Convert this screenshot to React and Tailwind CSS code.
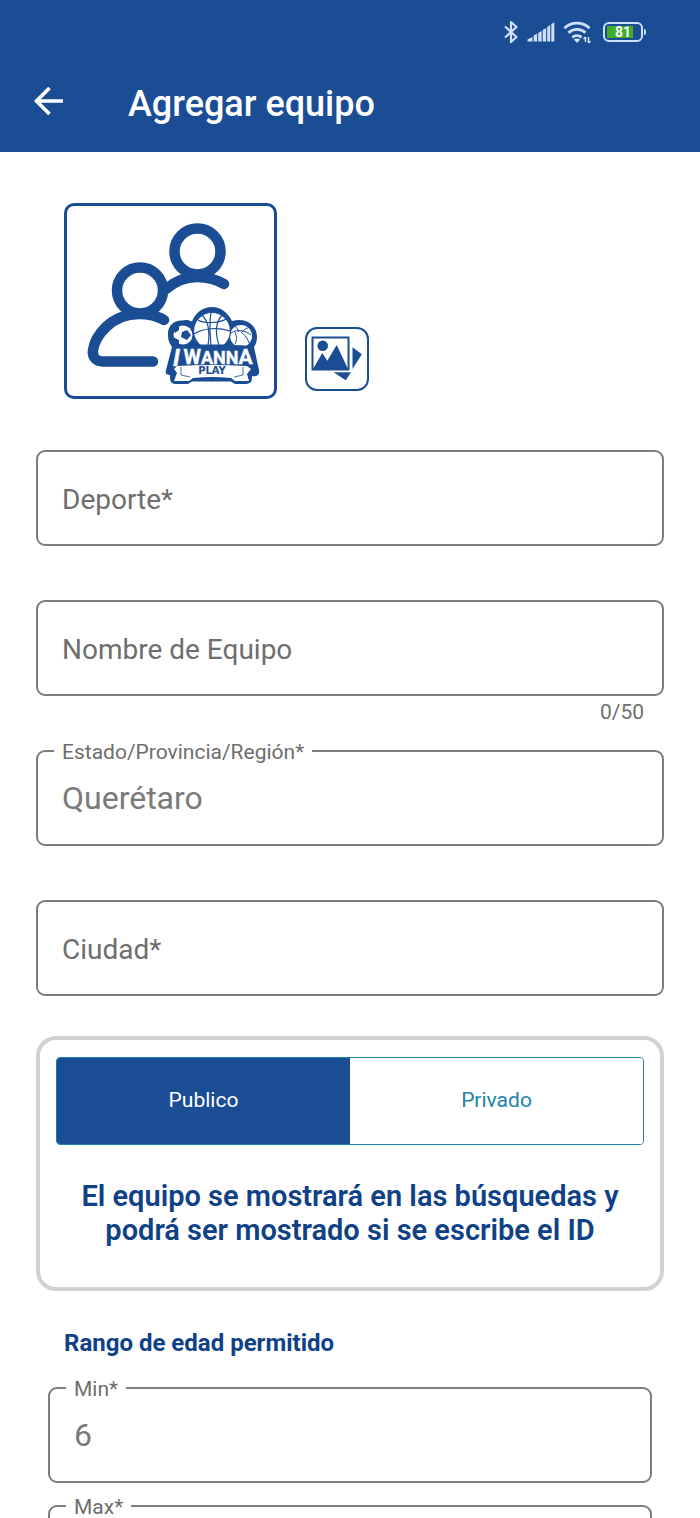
import React, { useState } from 'react';

const VISIBILITY = {
  Publico: 'El equipo se mostrará en las búsquedas y podrá ser mostrado si se escribe el ID',
  Privado: 'El equipo solo podrá ser mostrado si se escribe el ID',
};

function StatusBar() {
  return (
    <div className="flex h-16 items-center justify-end gap-2 pr-[54px] text-[#cfe0fb]">
      <svg className="h-6 w-4" viewBox="0 0 16 24" fill="none" stroke="currentColor" strokeWidth="2.200">
        <path d="M2 6.500 13.500 17 8 22V2l5.500 5L2 17.500" strokeLinejoin="round" />
      </svg>
      <svg className="h-5 w-7" viewBox="0 0 28 20" fill="currentColor">
        <path d="M.5 19.500v-2l5-2.500v4.500zM6.700 19.500v-6l3.400-2v8zM11.200 19.500v-8.500l3.400-2v10.500zM15.700 19.500V8l3.400-2v13.500zM20.200 19.500V5l3-2v16.500zM24.300 19.500V2L27.300.5v19z" />
      </svg>
      <svg className="h-6 w-7" viewBox="0 0 28 24" fill="none" stroke="currentColor" strokeWidth="2.800">
        <path d="M1.500 8.200a18 18 0 0 1 25 0M5.500 12.800a12.500 12.500 0 0 1 17 0M9.300 17.300a7.500 7.500 0 0 1 9.400 0" />
        <path d="m10.800 19.500 3.200 3.500 3.200-3.500c-2-1.300-4.400-1.300-6.400 0z" fill="currentColor" stroke="none" />
        <path d="M22.500 17v5M22.500 17l-2 2M25.500 17v6M25.500 23l2-2" strokeWidth="1.500" />
      </svg>
      <div className="ml-1 flex items-center gap-px">
        <div className="flex h-5 w-10 rounded-md border-2 border-current p-0.5">
          <div className="flex w-full items-center justify-center bg-linear-to-r from-[#3fae29] from-80% to-transparent to-80% text-sm font-bold text-white">
            81
          </div>
        </div>
        <div className="h-1.5 w-0.5 rounded-r bg-current" />
      </div>
    </div>
  );
}

function Header() {
  return (
    <header className="shrink-0 bg-[#1b4d95] pb-5">
      <StatusBar />
      <div className="flex h-17 items-center gap-16 pt-2 pl-8 text-white">
        <button type="button" aria-label="Volver">
          <svg className="h-8 w-8" viewBox="0 0 32 32" fill="none" stroke="currentColor" strokeWidth="3.600">
            <path d="M31 15H5M17.500 2 4.500 15l13 13" />
          </svg>
        </button>
        <h1 className="pt-1 text-[36px] leading-10 font-medium">Agregar equipo</h1>
      </div>
    </header>
  );
}

function TeamLogo() {
  return (
    <svg className="w-full" viewBox="3 2 207 190" fill="none">
      {/* People */}
      <g stroke="#1b4d95" strokeWidth="10.500" strokeLinecap="round">
        <circle cx="133.500" cy="47.500" r="23" />
        <path d="M102 85c7-6 17-12 31-12 11 0 20 3 27 7" />
        <circle cx="76" cy="86.500" r="23" />
        <path d="M100 116c-7-4-14-6-25-6-29 0-44 23-46 36-1 7 3 11.500 10 11.500h50" />
      </g>
      {/* Badge */}
      <path
        d="M104 132C103 122 110 116 118 116.500 122 115.500 125 116 128 117.500 131 109 139 103 148 103S164 109 168 117C182 113 193 121 193 133 193 137 192 140 190 143L195 166C196 171 193 173 188 172V174Q188 180 181 180H171L167 177.500H128L124 180H112Q106 180 106 174V171C102 171 101 169 102 166L108 143C106 140 104 137 104 132Z"
        fill="#1b4d95"
      />
      <circle cx="119" cy="131" r="9.500" fill="#fff" />
      <path d="m118 128 5-2 4 5-4 5-6-3zM109 125l6-3v4l-4 3zM109 133l6 3v4h-5z" fill="#1b4d95" />
      <circle cx="177" cy="132" r="11" fill="#fff" />
      <path
        d="M167 129c6-4 14-3 20 2M175 128c-1-3-3-5-4-6M178 128c2-2 4-4 6-4M177 128c4 3 7 7 8 11M171 128c2 5 2 8 0 12"
        stroke="#1b4d95"
        strokeWidth="1"
      />
      <circle cx="148" cy="127" r="18.500" fill="#fff" stroke="#1b4d95" strokeWidth="1.200" />
      <path
        d="M130 130c9-6 24-7 36-3M147 108.500c-2 11-1 22 0 34M138 111c7 7 8 18 6 30M158 111c-6 7-7 18-3 30M134 116c6 4 22 3 28-1"
        stroke="#1b4d95"
        strokeWidth="1.200"
      />
      <path d="M110 142c24-2 52-2 77 0l4 20h-84z" fill="#1b4d95" />
      <g fill="#fff" stroke="#fff" strokeWidth=".4" fontFamily="Roboto, sans-serif" fontWeight="700">
        <text x="109" y="162" fontSize="24" fontStyle="italic">I</text>
        <text x="154" y="160" fontSize="18" textAnchor="middle">
          <tspan fontSize="20">W</tspan>ANN<tspan fontSize="21">A</tspan>
        </text>
      </g>
      <path d="M110 165 113 162q34-2 70 0l4 3-4 5 2 7h-14l-4-3q-19-2-38 0l-4 3h-15l3-8z" fill="#fff" />
      <path d="M117 163v8l9 2M179 163v8l-9 2" stroke="#1b4d95" strokeWidth=".8" />
      <text x="148" y="170" fontSize="10" fontWeight="700" fontFamily="'DejaVu Sans', sans-serif" textAnchor="middle" fill="#1b4d95">
        PLAY
      </text>
    </svg>
  );
}

function GalleryIcon() {
  return (
    <svg className="w-full" viewBox="2 2 60 60" fill="#1b4d95">
      <path d="M7.500 10.500h36v32h-36z" fill="none" stroke="#1b4d95" strokeWidth="2" />
      <circle cx="17.700" cy="18.700" r="5.300" />
      <path d="m8 42 9.300-16 5 7.700L31.700 18 43 42zM47.500 20.300l9.300 7-9.300 14.700zM28.500 45.300H46l-5.300 8z" />
    </svg>
  );
}

function Field({ id, label, value, hint, maxLength }) {
  const [text, setText] = useState(value || '');

  return (
    <div className="relative">
      <input
        id={id}
        value={text}
        maxLength={maxLength}
        placeholder=" "
        onChange={(e) => setText(e.target.value)}
        className="peer block h-24 w-full rounded-[9px] border-2 border-[#7d7d7d] px-6 text-[32px] text-[#7a7a7a] outline-none"
      />
      <label
        htmlFor={id}
        className="pointer-events-none absolute -top-2 left-4.5 bg-white px-2 text-[21px] leading-5 text-[#6e6e6e] peer-placeholder-shown:top-8 peer-placeholder-shown:text-[28px] peer-placeholder-shown:leading-9"
      >
        {label}
      </label>
      {hint && <p className="absolute top-full right-5 text-[21px] leading-8 text-[#6e6e6e]">{hint}</p>}
    </div>
  );
}

function VisibilityPanel() {
  const [selected, setSelected] = useState('Publico');

  return (
    <section className="rounded-[20px] border-4 border-[#d2d2d2] px-4 pt-[17px] pb-10 text-center">
      <div className="flex h-22 overflow-hidden rounded border border-[#1b7fa6]">
        {Object.keys(VISIBILITY).map((name) => (
          <button
            key={name}
            type="button"
            aria-pressed={selected === name}
            onClick={() => setSelected(name)}
            className={`flex-1 text-[21px] ${selected === name ? 'bg-[#1b4d95] text-white' : 'bg-white text-[#1b84a8]'}`}
          >
            {name}
          </button>
        ))}
      </div>
      <p className="mt-[34px] px-2 text-[29px] leading-[34px] font-semibold text-[#0f4187]">{VISIBILITY[selected]}</p>
    </section>
  );
}

function App() {
  return (
    <div className="flex h-screen flex-col bg-white font-[Roboto,sans-serif]">
      <Header />
      <main className="min-h-0 flex-1 overflow-y-auto px-9 pt-[51px] pb-8 [scrollbar-width:none]">
        <div className="flex items-end gap-7 pl-7">
          <div className="w-[213px] rounded-[10px] border-3 border-[#1b4d95]">
            <TeamLogo />
          </div>
          <button type="button" aria-label="Elegir imagen" className="mb-2 w-16 rounded-xl border-2 border-[#1b4d95]">
            <GalleryIcon />
          </button>
        </div>

        <form className="mt-[51px]">
          <div className="flex flex-col gap-[54px]">
            <Field id="deporte" label="Deporte*" />
            <Field id="nombre" label="Nombre de Equipo" hint="0/50" maxLength={50} />
            <Field id="estado" label="Estado/Provincia/Región*" value="Querétaro" />
            <Field id="ciudad" label="Ciudad*" />
          </div>

          <div className="mt-10">
            <VisibilityPanel />
          </div>

          <h2 className="mt-9 pl-7 text-[24px] leading-8 font-bold text-[#0f4187]">Rango de edad permitido</h2>
          <div className="mt-7 flex flex-col gap-[22px] px-3">
            <Field id="min" label="Min*" value="6" />
            <Field id="max" label="Max*" value="99" />
          </div>
        </form>
      </main>
    </div>
  );
}

export default App;
